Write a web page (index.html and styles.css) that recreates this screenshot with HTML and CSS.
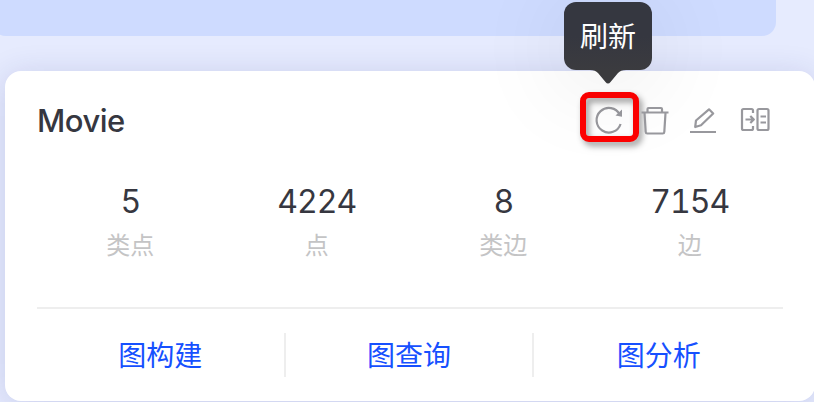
FILE: index.html
```html
<!DOCTYPE html>
<html lang="zh-CN">
<head>
<meta charset="utf-8">
<title>Movie</title>
<link rel="stylesheet" href="styles.css">
</head>
<body>
<div class="banner"></div>
<article class="card">
  <header class="head">
    <h2 class="title">Movie</h2>
    <div class="actions">
      <span class="action refresh">
        <svg width="32" height="32" viewBox="0 0 32 32"><path d="M26.800 9.500A12.300 12.300 0 1 0 27.600 19"/><path class="solid" d="M29 4.500v7.200l-6.500-1.200z"/></svg>
        <span class="highlight"></span>
        <span class="tooltip">刷新<svg class="arrow" width="36" height="16" viewBox="0 0 36 16"><path d="M0 0C4 0 6 1 8 3l7.500 9q2.500 3 5 0L28 3c2-2 4-3 8-3z"/></svg></span>
      </span>
      <svg class="action" width="32" height="32" viewBox="0 0 32 32"><path d="M2.500 7.500h27M8.500 7.500V4q0-1 1-1h12.500q1 0 1 1v3.500M5.500 8l1.200 19q.1 1.500 1.600 1.500h15.400q1.500 0 1.600-1.500L26.500 8"/></svg>
      <svg class="action" width="32" height="32" viewBox="0 0 32 32"><path d="M3 27h26M8.200 22l.8-6.500L22 4.300l4.200 4.200L14 20.300z"/></svg>
      <svg class="action" width="32" height="32" viewBox="0 0 32 32"><path d="M15 8V5.500Q15 4 13.500 4H5.500Q4 4 4 5.500v18Q4 25 5.500 25h8q1.500 0 1.500-1.500V21M7.500 14.500h8M12.300 11l3.500 3.500L12.300 18M21 4h8q1.500 0 1.500 1.500v18q0 1.500-1.500 1.500h-8q-1.500 0-1.500-1.500v-18Q19.500 4 21 4zM22.500 11.500h5.500M22.500 17.500h5.500"/></svg>
    </div>
  </header>
  <dl class="stats">
    <div><dd>5</dd><dt>类点</dt></div>
    <div><dd>4224</dd><dt>点</dt></div>
    <div><dd>8</dd><dt>类边</dt></div>
    <div><dd>7154</dd><dt>边</dt></div>
  </dl>
  <nav class="links">
    <a>图构建</a>
    <a>图查询</a>
    <a>图分析</a>
  </nav>
</article>
</body>
</html>
```
FILE: styles.css
```css
* { box-sizing: border-box; }
body {
  margin: 0;
  height: 402px;
  overflow: hidden;
  background: #e6ebfe;
  font-family: Inter, "Noto Sans CJK SC", sans-serif;
  color: #363740;
}
.banner {
  width: 784px;
  height: 36px;
  margin-left: -8px;
  border-radius: 0 0 14px 14px;
  background: #cedbff;
}
.card {
  width: 810px;
  height: 330px;
  margin: 35px 0 0 5px;
  padding: 32px;
  border-radius: 16px;
  background: #fff;
  box-shadow: 0 4px 32px rgba(36, 41, 133, .16);
}
.head {
  display: flex;
  align-items: center;
  justify-content: space-between;
  height: 36px;
}
.title {
  margin: 0;
  font-size: 31px;
  font-weight: 550;
  line-height: 36px;
  letter-spacing: -.5px;
}
.actions {
  display: flex;
  gap: 16px;
  margin-right: 13px;
}
.action {
  position: relative;
  display: block;
  width: 32px;
  height: 32px;
}
.actions svg {
  fill: none;
  stroke: #98989d;
  stroke-width: 2.2;
  stroke-linejoin: round;
}
.action:last-child { margin-left: 3px; }
.refresh { margin: 0 -2px 0 -1px; }
.refresh > svg { display: block; }
.actions .solid { fill: #98989d; stroke: none; }
.highlight {
  position: absolute;
  left: -13px;
  top: -13px;
  width: 59px;
  height: 50px;
  border: 6px solid #fe0000;
  border-radius: 9px;
  filter: drop-shadow(3px 4px 3px rgba(0, 0, 0, .4));
}
.tooltip {
  position: absolute;
  left: -29px;
  top: -103px;
  width: 88px;
  height: 68px;
  padding-top: 1px;
  border-radius: 12px;
  background: linear-gradient(#353740 0 50%, #3b3b3f);
  color: #fff;
  font-size: 28px;
  line-height: 68px;
  text-align: center;
  box-shadow: 0 12px 96px rgba(0, 0, 0, .1);
}
.actions .arrow {
  position: absolute;
  left: 26px;
  top: 68px;
  fill: #3b3b3d;
  stroke: none;
}
.stats {
  display: grid;
  grid-template-columns: repeat(4, 1fr);
  height: 168px;
  margin: 0;
  padding-top: 43px;
  text-align: center;
}
.stats dd {
  margin: 0;
  font-size: 32px;
  line-height: 40px;
  font-variant-numeric: tabular-nums;
  letter-spacing: -1px;
}
.stats dt {
  margin-top: 6px;
  font-size: 24px;
  line-height: 36px;
  color: #c4c4c5;
}
.links {
  display: grid;
  grid-template-columns: repeat(3, 1fr);
  padding-top: 24px;
  border-top: 2px solid #eee;
}
.links a {
  height: 44px;
  padding-top: 1px;
  font-size: 28px;
  line-height: 44px;
  text-align: center;
  color: #1650ff;
}
.links a:not(:last-child) { border-right: 2px solid #eee; }
```
